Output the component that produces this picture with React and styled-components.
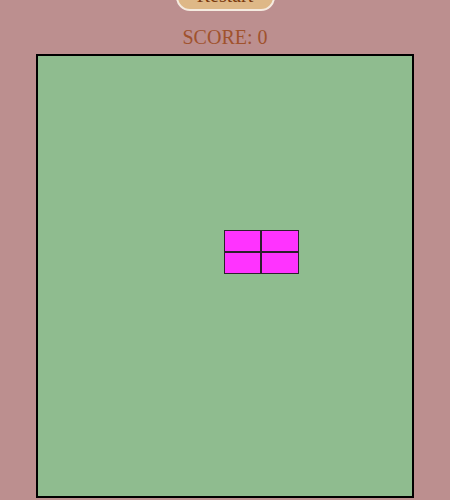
import React from "react"
import styled, { createGlobalStyle } from "styled-components"

const Global = createGlobalStyle`
  html, body {
    margin: 0;
    padding: 0;
    background: #bc8f8f;
    font-family: "Liberation Serif", "Times New Roman", serif;
  }
`

const Page = styled.div`
  display: flex;
  flex-direction: column;
  align-items: center;
  margin-top: -24px;
`

const Button = styled.button`
  font-family: "Liberation Serif", serif;
  font-size: 20px;
  color: #7a3a10;
  background: #deb887;
  border: 2px solid #f5ebe0;
  border-radius: 14px;
  padding: 7px 18px 4px;
  width: 99px;
  height: 35px;
  line-height: 20px;
`

const Score = styled.div`
  margin-top: 14px;
  font-size: 20px;
  line-height: 24px;
  color: #a0522d;
`

const Board = styled.div`
  margin-top: 5px;
  width: 374px;
  height: 440px;
  border: 2px solid #000;
  background: #8fbc8f;
  display: grid;
  grid-template-columns: repeat(10, 1fr);
  grid-template-rows: repeat(20, 1fr);
`

const Cell = styled.div`
  background: #ff33ff;
  border: 1px solid #2e1f2e;
  box-sizing: border-box;
  transform: translate(-1px, -2px);
`

const piece = [
  [8, 5], [8, 6], [9, 5], [9, 6],
]

export default function App() {
  return (
    <>
      <Global />
      <Page>
        <Button>Restart</Button>
        <Score>SCORE: 0</Score>
        <Board>
          {piece.map(([r, c]) => (
            <Cell key={`${r}-${c}`} style={{ gridRow: r + 1, gridColumn: c + 1 }} />
          ))}
        </Board>
      </Page>
    </>
  )
}
